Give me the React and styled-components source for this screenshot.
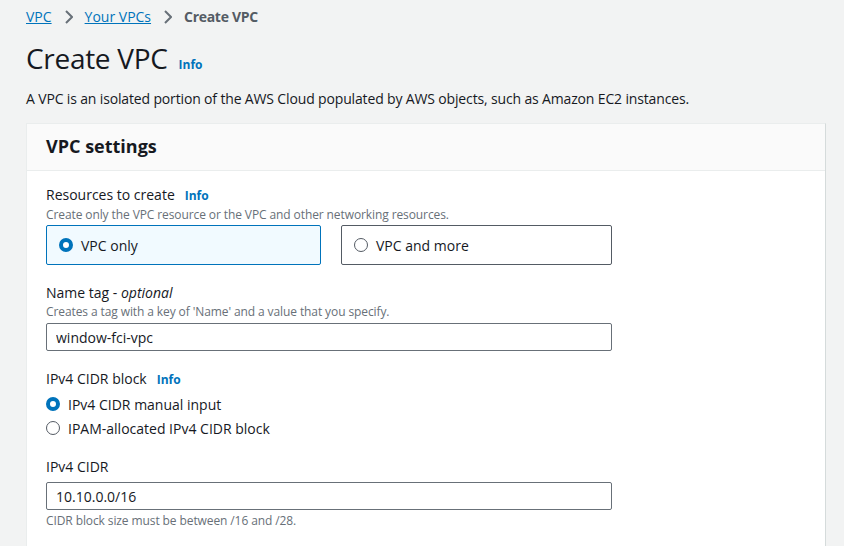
import React, { useState } from "react";
import styled, { createGlobalStyle } from "styled-components";

const GlobalStyle = createGlobalStyle`
  html, body {
    margin: 0;
    padding: 0;
    background: #f2f3f3;
  }
  body {
    font-family: "Open Sans", "Noto Sans", Arial, sans-serif;
    color: #16191f;
  }
`;

const Page = styled.div`
  padding: 0 18px 0 26px;
  height: 546px;
  overflow: hidden;
  box-sizing: border-box;
`;

const Crumbs = styled.nav`
  display: flex;
  align-items: center;
  height: 33px;
  font-size: 14px;
  a {
    color: #0073bb;
    text-decoration: underline;
  }
  span.current {
    color: #545b64;
    font-weight: 700;
    letter-spacing: -0.3px;
  }
  svg {
    margin: 0 12px 0 13px;
  }
`;

const TitleRow = styled.div`
  display: flex;
  align-items: baseline;
  gap: 11px;
  margin-top: 7px;
  h1 {
    margin: 0;
    font-size: 28px;
    font-weight: 400;
    line-height: 36px;
    letter-spacing: -0.3px;
  }
`;

const Info = styled.a`
  color: #0073bb;
  font-size: 12px;
  font-weight: 700;
  text-decoration: none;
  margin-left: ${(p) => p.gap || 0}px;
`;

const Lead = styled.p`
  margin: 12px 0 13px;
  font-size: 14px;
  line-height: 22px;
  letter-spacing: -0.15px;
`;

const Card = styled.section`
  width: 800px;
  background: #fff;
  border: 1px solid #eaeded;
  border-right-color: #d5dbdb;
  box-sizing: border-box;
`;

const CardHeader = styled.header`
  height: 47px;
  background: #fafafa;
  border-bottom: 1px solid #eaeded;
  display: flex;
  align-items: center;
  padding: 0 19px 3px;
  box-sizing: border-box;
  h2 {
    margin: 0;
    font-size: 18px;
    font-weight: 700;
  }
`;

const CardBody = styled.div`
  padding: 13px 19px 20px;
  width: 566px;
  box-sizing: content-box;
`;

const Field = styled.div`
  margin-bottom: ${(p) => p.mb ?? 20}px;
`;

const Label = styled.div`
  font-size: 14px;
  line-height: 22px;
  display: flex;
  align-items: baseline;
`;

const Optional = styled.i`
  font-style: italic;
`;

const Hint = styled.div`
  font-size: 12px;
  line-height: 16px;
  color: #687078;
  margin-top: ${(p) => p.mt || 0}px;
  letter-spacing: -0.1px;
`;

const Tiles = styled.div`
  display: grid;
  grid-template-columns: 275px 271px;
  gap: 20px;
  margin-top: 2px;
`;

const Tile = styled.label`
  height: 40px;
  box-sizing: border-box;
  border: 1px solid ${(p) => (p.selected ? "#0073bb" : "#545b64")};
  background: ${(p) => (p.selected ? "#f1faff" : "#fff")};
  border-radius: 2px;
  display: flex;
  align-items: center;
  padding: 0 12px;
  gap: 8px;
  font-size: 14px;
  cursor: pointer;
`;

const Radio = styled.span`
  width: 14px;
  height: 14px;
  border-radius: 50%;
  box-sizing: border-box;
  flex-shrink: 0;
  border: ${(p) => (p.checked ? "4px solid #0073bb" : "1.5px solid #545b64")};
  background: #fff;
`;

const RadioRow = styled.label`
  display: flex;
  align-items: center;
  gap: 8px;
  height: 24px;
  font-size: 14px;
  cursor: pointer;
`;

const RadioList = styled.div`
  margin-top: 1px;
`;

const Input = styled.input`
  display: block;
  width: 100%;
  height: 28px;
  box-sizing: border-box;
  margin-top: ${(p) => p.mt || 0}px;
  border: 1px solid #687078;
  border-radius: 2px;
  padding: 0 9px;
  font-family: inherit;
  font-size: 14px;
  color: #16191f;
  background: #fff;
  outline: none;
`;

const Chevron = () => (
  <svg width="8" height="14" viewBox="0 0 8 14">
    <path d="M1 1l6 6-6 6" fill="none" stroke="#687078" strokeWidth="2" />
  </svg>
);

export default function App() {
  const [scope, setScope] = useState("only");
  const [cidrMode, setCidrMode] = useState("manual");
  const [name, setName] = useState("window-fci-vpc");
  const [cidr, setCidr] = useState("10.10.0.0/16");

  return (
    <>
      <GlobalStyle />
      <Page>
        <Crumbs>
          <a href="#">VPC</a>
          <Chevron />
          <a href="#">Your VPCs</a>
          <Chevron />
          <span className="current">Create VPC</span>
        </Crumbs>
        <TitleRow>
          <h1>Create VPC</h1>
          <Info href="#">Info</Info>
        </TitleRow>
        <Lead>
          A VPC is an isolated portion of the AWS Cloud populated by AWS
          objects, such as Amazon EC2 instances.
        </Lead>
        <Card>
          <CardHeader>
            <h2>VPC settings</h2>
          </CardHeader>
          <CardBody>
            <Field mb={17}>
              <Label>
                Resources to create<Info gap={10} href="#">Info</Info>
              </Label>
              <Hint>
                Create only the VPC resource or the VPC and other networking
                resources.
              </Hint>
              <Tiles>
                <Tile selected={scope === "only"} onClick={() => setScope("only")}>
                  <Radio checked={scope === "only"} />
                  VPC only
                </Tile>
                <Tile selected={scope === "more"} onClick={() => setScope("more")}>
                  <Radio checked={scope === "more"} />
                  VPC and more
                </Tile>
              </Tiles>
            </Field>
            <Field mb={17}>
              <Label>
                Name tag -&nbsp;<Optional>optional</Optional>
              </Label>
              <Hint>Creates a tag with a key of 'Name' and a value that you specify.</Hint>
              <Input mt={3} value={name} onChange={(e) => setName(e.target.value)} />
            </Field>
            <Field mb={16}>
              <Label>
                IPv4 CIDR block<Info gap={10} href="#">Info</Info>
              </Label>
              <RadioList>
                <RadioRow onClick={() => setCidrMode("manual")}>
                  <Radio checked={cidrMode === "manual"} />
                  IPv4 CIDR manual input
                </RadioRow>
                <RadioRow onClick={() => setCidrMode("ipam")}>
                  <Radio checked={cidrMode === "ipam"} />
                  IPAM-allocated IPv4 CIDR block
                </RadioRow>
              </RadioList>
            </Field>
            <Field>
              <Label>IPv4 CIDR</Label>
              <Input mt={4} value={cidr} onChange={(e) => setCidr(e.target.value)} />
              <Hint mt={3}>CIDR block size must be between /16 and /28.</Hint>
            </Field>
          </CardBody>
        </Card>
      </Page>
    </>
  );
}
